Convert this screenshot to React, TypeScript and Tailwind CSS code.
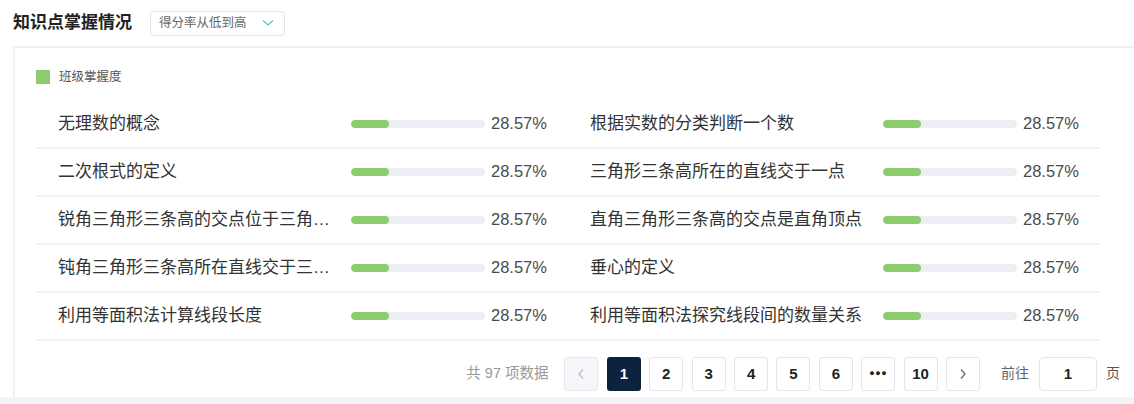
import React from "react";

const FONT = { fontFamily: '"Liberation Sans", "Noto Sans CJK SC", sans-serif' };

const items: string[] = [
  "无理数的概念",
  "根据实数的分类判断一个数",
  "二次根式的定义",
  "三角形三条高所在的直线交于一点",
  "锐角三角形三条高的交点位于三角形内",
  "直角三角形三条高的交点是直角顶点",
  "钝角三角形三条高所在直线交于三角形外一点",
  "垂心的定义",
  "利用等面积法计算线段长度",
  "利用等面积法探究线段间的数量关系",
];

const pages = ["1", "2", "3", "4", "5", "6", "•••", "10"];

function Row({ name, rate }: { name: string; rate: number }) {
  return (
    <div className="flex h-[48px] items-center border-b-2 border-[#f0f1f5] pl-[22px]">
      <span className="mr-[18px] w-[275px] truncate text-[17px] text-[#333]">{name}</span>
      <div className="h-[8px] w-[134px] overflow-hidden rounded-full bg-[#edeef3]">
        <div className="h-full rounded-full bg-[#8ccb70]" style={{ width: `${rate}%` }} />
      </div>
      <span className="ml-[6px] text-[16.5px] text-[#4a4a4a]">{rate.toFixed(2)}%</span>
    </div>
  );
}

export default function App() {
  return (
    <div className="h-[404px] w-full overflow-hidden bg-white" style={FONT}>
      <div className="flex h-[46px] items-center gap-[18px] px-[13px]">
        <h2 className="text-[17px] font-bold text-[#222]">知识点掌握情况</h2>
        <div className="flex h-[25px] w-[135px] items-center justify-between rounded-[3px] border border-[#e2e4ea] pl-[8px] pr-[10px]">
          <span className="text-[12.5px] text-[#666]">得分率从低到高</span>
          <svg width="12" height="8" viewBox="0 0 12 8" fill="none">
            <polyline points="1,1.5 6,6 11,1.5" stroke="#4cc6c6" strokeWidth="1.2" />
          </svg>
        </div>
      </div>

      <div className="ml-[13px] h-[351px] border-l-2 border-t-2 border-[#eef0f5] pl-[21px] pr-[12px]">
        <div className="mt-[20px] flex items-center gap-[9px]">
          <span className="h-[14px] w-[14px] bg-[#8dcb71]" />
          <span className="text-[12.5px] text-[#555]">班级掌握度</span>
        </div>

        <div className="mt-[14px] grid w-[1064px] grid-cols-2">
          {items.map((name) => (
            <Row key={name} name={name} rate={28.57} />
          ))}
        </div>

        <div className="mt-[16px] flex items-center justify-end">
          <span className="mr-[16px] text-[14.5px] text-[#999]">共 97 项数据</span>
          <div className="flex items-center gap-[8.4px]">
            <button className="flex h-[34px] w-[34px] items-center justify-center rounded-[3px] border border-[#e6e8ed] bg-[#f5f6f9]">
              <svg width="8" height="12" viewBox="0 0 8 12" fill="none">
                <polyline points="6,1.5 2,6 6,10.5" stroke="#b8bcc4" strokeWidth="1.2" />
              </svg>
            </button>
            {pages.map((p, i) => (
              <button
                key={p}
                className={
                  i === 0
                    ? "flex h-[34px] w-[34px] items-center justify-center rounded-[3px] bg-[#0c2340] text-[15px] font-bold text-white"
                    : "flex h-[34px] w-[34px] items-center justify-center rounded-[3px] border border-[#e3e5ea] bg-white text-[15px] font-bold text-[#222]"
                }
              >
                {p === "•••" ? <span className="text-[9px] tracking-[0.5px]">●●●</span> : p}
              </button>
            ))}
            <button className="flex h-[34px] w-[34px] items-center justify-center rounded-[3px] border border-[#e3e5ea] bg-white">
              <svg width="8" height="12" viewBox="0 0 8 12" fill="none">
                <polyline points="2,1.5 6,6 2,10.5" stroke="#666" strokeWidth="1.2" />
              </svg>
            </button>
          </div>
          <span className="ml-[21px] text-[14px] text-[#666]">前往</span>
          <div className="ml-[10px] flex h-[34px] w-[58px] items-center justify-center rounded-[4px] border border-[#e3e5ea] text-[15px] font-bold text-[#222]">
            1
          </div>
          <span className="ml-[9px] mr-[2px] text-[14px] text-[#555]">页</span>
        </div>
      </div>
      <div className="h-[7px] bg-[#f4f5f9]" />
    </div>
  );
}
